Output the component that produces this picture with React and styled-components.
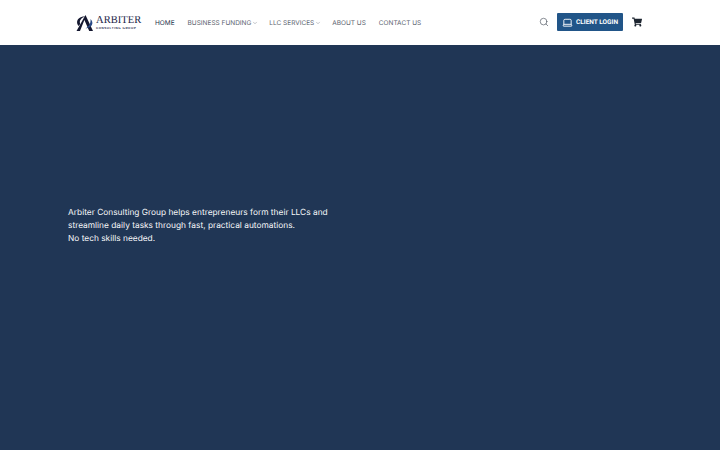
import React from "react";
import styled, { createGlobalStyle } from "styled-components";
import { Search, Laptop, ChevronDown } from "lucide-react";
import { FaShoppingCart } from "react-icons/fa";

const GlobalStyle = createGlobalStyle`
  html, body { margin: 0; padding: 0; }
  body {
    background: #203655;
    font-family: Inter, "Noto Sans", sans-serif;
    text-rendering: geometricPrecision;
  }
`;

const Page = styled.div`
  width: 720px;
  height: 450px;
  overflow: hidden;
  display: flex;
  flex-direction: column;
`;

const Header = styled.header`
  height: 45px;
  flex: none;
  background: #fff;
  box-sizing: border-box;
  padding: 0 78px 0 75px;
  display: flex;
  align-items: center;
  box-shadow: 0 1px 2px rgba(0, 0, 0, 0.25);
`;

const Logo = styled.a`
  display: flex;
  align-items: center;
  width: 67px;
  margin-right: 13px;
  flex: none;
`;

const LogoWords = styled.div`
  margin-left: 1px;
  display: flex;
  flex-direction: column;
  color: #1b2347;
  line-height: 1;
`;

const LogoName = styled.span`
  font-family: "Liberation Serif", serif;
  font-size: 10.5px;
  letter-spacing: 0.05px;
  line-height: 10px;
`;

const LogoSub = styled.span`
  font-family: "Liberation Sans", sans-serif;
  font-size: 3px;
  font-weight: 700;
  letter-spacing: 0.55px;
  line-height: 4px;
  white-space: nowrap;
`;

const Nav = styled.nav`
  display: flex;
  align-items: center;
  gap: 13px;
`;

const NavItem = styled.a`
  display: flex;
  align-items: center;
  gap: 1px;
  font-size: 6.5px;
  white-space: nowrap;
  color: ${({ $active }) => ($active ? "#22304a" : "#5d6470")};
`;

const Caret = styled(ChevronDown)`
  margin-right: -2px;
`;

const Actions = styled.div`
  margin-left: auto;
  padding-bottom: 1px;
  display: flex;
  align-items: center;
`;

const SearchButton = styled.span`
  display: flex;
  color: #4f5661;
  margin-right: 8px;
`;

const LoginButton = styled.a`
  width: 66px;
  height: 18px;
  box-sizing: border-box;
  background: #215588;
  border-radius: 1px;
  display: flex;
  align-items: center;
  justify-content: center;
  gap: 3px;
  color: #fff;
  font-family: Roboto, sans-serif;
  font-size: 6.5px;
  font-weight: 700;
  white-space: nowrap;
  margin-right: 9px;
`;

const CartButton = styled.span`
  display: flex;
  color: #1d2530;
`;

const Hero = styled.main`
  flex: 1;
  background: #203655;
  box-sizing: border-box;
  padding: 162px 0 0 68px;
`;

const Blurb = styled.p`
  margin: 0;
  width: 275px;
  color: #f7f8fa;
  font-size: 8.35px;
  line-height: 13px;
`;

const navItems = [
  { label: "HOME", active: true },
  { label: "BUSINESS FUNDING", menu: true },
  { label: "LLC SERVICES", menu: true },
  { label: "ABOUT US" },
  { label: "CONTACT US" },
];

export default function App() {
  return (
    <Page>
      <GlobalStyle />
      <Header>
        <Logo>
          <svg width="20" height="18" viewBox="0 0 20 18" style={{ flex: "none" }}>
            <path d="M10.5 1 L18 17 H14.2 L9.4 6 L5 17 H1.5 Z" fill="#14172f" />
            <path d="M3.5 12 C-0.5 7 4.5 1.5 11 2.6 C6.5 3.2 3.8 7 5.2 10 Z" fill="#14172f" />
            <path d="M15.5 5 C19.5 8.5 17 14 10.5 14.5 C13.5 13 16 9.5 15.5 5 Z" fill="#2a4a86" />
          </svg>
          <LogoWords>
            <LogoName>ARBITER</LogoName>
            <LogoSub>CONSULTING GROUP</LogoSub>
          </LogoWords>
        </Logo>
        <Nav>
          {navItems.map((item) => (
            <NavItem key={item.label} $active={item.active}>
              {item.label}
              {item.menu && <Caret size={6} strokeWidth={1.5} />}
            </NavItem>
          ))}
        </Nav>
        <Actions>
          <SearchButton>
            <Search size={10} strokeWidth={1.6} />
          </SearchButton>
          <LoginButton>
            <Laptop size={11} strokeWidth={2} />
            CLIENT LOGIN
          </LoginButton>
          <CartButton>
            <FaShoppingCart size={10} />
          </CartButton>
        </Actions>
      </Header>
      <Hero>
        <Blurb>
          Arbiter Consulting Group helps entrepreneurs form their LLCs and
          streamline daily tasks through fast, practical automations.
          <br />
          No tech skills needed.
        </Blurb>
      </Hero>
    </Page>
  );
}
